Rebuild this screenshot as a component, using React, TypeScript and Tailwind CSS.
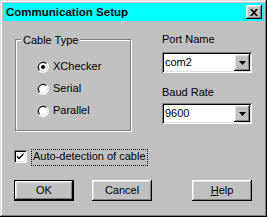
import React from "react";

const raised =
  "shadow-[inset_-1px_-1px_0_#000,inset_1px_1px_0_#fff,inset_-2px_-2px_0_#808080,inset_2px_2px_0_#dfdfdf]";
const sunken =
  "shadow-[inset_1px_1px_0_#808080,inset_-1px_-1px_0_#fff,inset_2px_2px_0_#000,inset_-2px_-2px_0_#dfdfdf]";

function Radio({ label, checked }: { label: string; checked?: boolean }) {
  return (
    <label className="flex h-[13px] items-center gap-[4px] leading-[13px]">
      <svg width="12" height="12" viewBox="0 0 12 12" className="shrink-0">
        <circle cx="6" cy="6" r="6" fill="#fff" />
        <path d="M1.76 10.24A6 6 0 0 1 10.24 1.76Z" fill="#808080" />
        <circle cx="6" cy="6" r="5" fill="#dfdfdf" />
        <path d="M2.46 9.54A5 5 0 0 1 9.54 2.46Z" fill="#000" />
        <circle cx="6" cy="6" r="4" fill="#fff" />
        {checked && <circle cx="6" cy="6" r="2" fill="#000" />}
      </svg>
      <span>{label}</span>
    </label>
  );
}

function Combo({ value }: { value: string }) {
  return (
    <div className={`flex h-[21px] w-[90px] items-center bg-white p-[2px] ${sunken}`}>
      <span className="flex-1 pl-[1px] leading-[13px]">{value}</span>
      <span className={`flex h-[17px] w-[16px] items-center justify-center bg-[#c0c0c0] ${raised}`}>
        <svg width="7" height="4" viewBox="0 0 7 4">
          <path d="M0 0H7L3.5 4Z" fill="#000" />
        </svg>
      </span>
    </div>
  );
}

function Button({ children, primary }: { children: React.ReactNode; primary?: boolean }) {
  return (
    <button
      className={`flex h-[21px] w-[60px] items-center justify-center bg-[#c0c0c0] leading-[13px] ${raised} ${
        primary ? "border border-black" : ""
      }`}
    >
      {children}
    </button>
  );
}

export default function App() {
  return (
    <div
      className="h-[217px] w-[267px] bg-[#c0c0c0] p-[3px] text-[11px] text-black shadow-[inset_-1px_-1px_0_#000,inset_1px_1px_0_#dfdfdf,inset_-2px_-2px_0_#808080,inset_2px_2px_0_#fff]"
      style={{ fontFamily: '"Liberation Sans", Arial, sans-serif' }}
    >
      <div className="flex h-[18px] items-center justify-between bg-[#00ffff] pl-[3px] pr-[2px]">
        <span className="text-[11.5px] font-bold leading-[14px]">Communication Setup</span>
        <span className={`flex h-[14px] w-[16px] items-center justify-center bg-[#c0c0c0] ${raised}`}>
          <svg width="8" height="7" viewBox="0 0 8 7">
            <path d="M0 0H2L4 2.2L6 0H8L5 3.5L8 7H6L4 4.8L2 7H0L3 3.5Z" fill="#000" />
          </svg>
        </span>
      </div>

      <div className="px-[11px]">
        <div className="flex items-start">
          <div className="relative ml-[1px] mt-[18px] h-[92px] w-[116px] border border-[#808080] shadow-[inset_1px_1px_0_#fff,1px_1px_0_#fff]">
            <span className="absolute left-[5px] top-[-6px] bg-[#c0c0c0] px-[2px] leading-[13px]">
              Cable Type
            </span>
            <div className="flex flex-col gap-[9px] pl-[21px] pt-[20px]">
              <Radio label="XChecker" checked />
              <Radio label="Serial" />
              <Radio label="Parallel" />
            </div>
          </div>

          <div className="ml-[31px] flex flex-col">
            <span className="mt-[12px] leading-[13px]">Port Name</span>
            <div className="mt-[6px]">
              <Combo value="com2" />
            </div>
            <span className="mt-[13px] leading-[13px]">Baud Rate</span>
            <div className="mt-[4px]">
              <Combo value="9600" />
            </div>
          </div>
        </div>

        <div className="mt-[18px] flex items-start gap-[4px]">
          <span className={`mt-[1px] flex h-[13px] w-[13px] items-center justify-center bg-white ${sunken}`}>
            <svg width="13" height="13" viewBox="0 0 13 13">
              <path d="M3 5.5L5 7.5L9.5 3V5L5 9.5L3 7.5Z" fill="#000" />
            </svg>
          </span>
          <span className="border border-dotted border-black px-[1px] pb-[2px] leading-[13px]">
            Auto-detection of cable
          </span>
        </div>

        <div className="mt-[14px] flex items-start">
          <Button primary>OK</Button>
          <div className="ml-[18px]">
            <Button>Cancel</Button>
          </div>
          <div className="ml-[40px]">
            <Button>
              <span className="underline">H</span>elp
            </Button>
          </div>
        </div>
      </div>
    </div>
  );
}
